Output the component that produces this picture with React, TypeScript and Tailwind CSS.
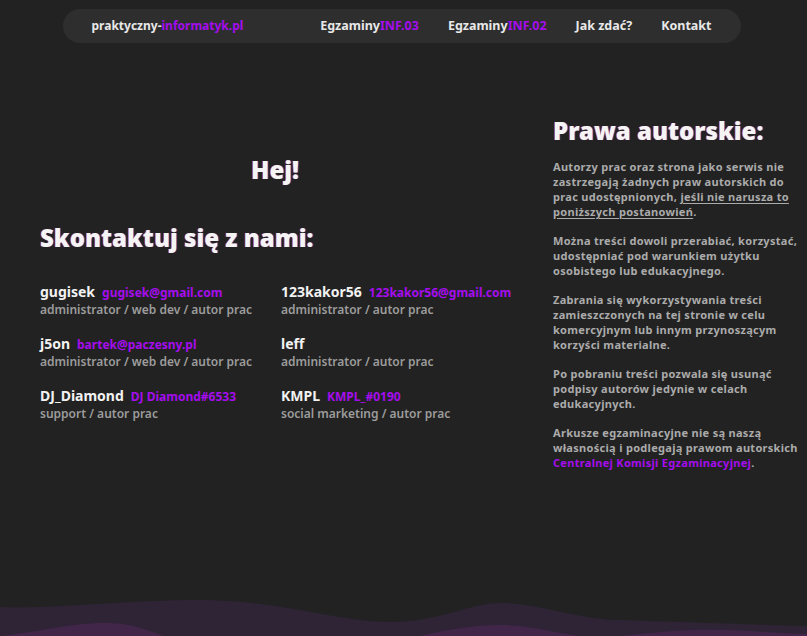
import React from "react";

const purple = "text-[#a50ded]";

function Contact({ name, handle, role }: { name: string; handle?: string; role: string }) {
  return (
    <div className="flex flex-col">
      <div className="flex items-baseline gap-[7px] h-[19px] leading-[19px] whitespace-nowrap">
        <span className="text-[14px] font-bold text-[#f2f2f2]">{name}</span>
        {handle && <span className={`text-[12px] font-bold ${purple}`}>{handle}</span>}
      </div>
      <div className="text-[12px] font-semibold text-[#9c9c9c] leading-[17px] h-[17px] whitespace-nowrap">{role}</div>
    </div>
  );
}

function Wave() {
  return (
    <svg className="block w-full h-[40px]" viewBox="0 0 807 40" preserveAspectRatio="none">
      <path
        d="M0 11 C60 13 120 4 200 4 C280 4 340 26 390 26 C440 26 470 7 500 7 C540 7 580 24 620 24 C680 26 740 28 807 30 L807 40 L0 40 Z"
        fill="#2e2435"
      />
      <path
        d="M0 40 C40 36 70 27 105 27 C135 27 150 36 165 40 Z M420 40 C450 33 475 29 500 29 C530 29 560 38 580 40 Z M620 40 C660 36 690 33 720 34 C760 35 790 38 807 38 L807 40 Z"
        fill="#42264a"
      />
    </svg>
  );
}

export default function App() {
  const shadow = "[text-shadow:-1px_0_rgba(255,40,40,0.5),1px_0_rgba(60,80,255,0.5)]";
  return (
    <div
      className="w-full h-[636px] bg-[#222222] flex flex-col overflow-hidden"
      style={{ fontFamily: "'Noto Sans', Lato, sans-serif" }}
    >
      <div className="pt-[9px] flex justify-center">
        <nav className="ml-[-4px] w-[678px] h-[34px] rounded-full bg-[#2e2e2e] flex items-center pl-[29px] pr-[29px] text-[12.5px] font-bold text-[#e8e8e8] whitespace-nowrap">
          <span className="text-[12px]">
            praktyczny-<span className={purple}>informatyk.pl</span>
          </span>
          <div className="ml-auto flex items-center gap-[29px]">
            <span>
              Egzaminy<span className={purple}>INF.03</span>
            </span>
            <span>
              Egzaminy<span className={purple}>INF.02</span>
            </span>
            <span>Jak zdać?</span>
            <span>Kontakt</span>
          </div>
        </nav>
      </div>

      <main className="flex pl-[40px] pt-[72px]">
        <section className="w-[513px] flex flex-col">
          <h1 className={`pt-[39px] w-[470px] text-center text-[24px] leading-[32px] font-black text-[#f4f4f4] ${shadow}`}>
            Hej!
          </h1>
          <h2 className={`mt-[36px] text-[24px] leading-[32px] font-black text-[#f4f4f4] whitespace-nowrap ${shadow}`}>
            Skontaktuj się z nami:
          </h2>
          <div className="mt-[28px] grid grid-cols-[241px_241px] gap-y-[16px]">
            <Contact name="gugisek" handle="gugisek@gmail.com" role="administrator / web dev / autor prac" />
            <Contact name="123kakor56" handle="123kakor56@gmail.com" role="administrator / autor prac" />
            <Contact name="j5on" handle="bartek@paczesny.pl" role="administrator / web dev / autor prac" />
            <Contact name="leff" role="administrator / autor prac" />
            <Contact name="DJ_Diamond" handle="DJ Diamond#6533" role="support / autor prac" />
            <Contact name="KMPL" handle="KMPL_#0190" role="social marketing / autor prac" />
          </div>
        </section>

        <aside className="w-[245px] flex flex-col">
          <h2 className={`text-[24px] leading-[32px] font-black text-[#f4f4f4] whitespace-nowrap ${shadow}`}>
            Prawa autorskie:
          </h2>
          <div className="mt-[12px] text-[11px] tracking-[0.3px] leading-[15px] font-bold text-[#ababab] flex flex-col gap-[14px] whitespace-nowrap">
            <p>
              Autorzy prac oraz strona jako serwis nie
              <br />
              zastrzegają żadnych praw autorskich do
              <br />
              prac udostępnionych,{" "}
              <span className="underline underline-offset-2">jeśli nie narusza to</span>
              <br />
              <span className="underline underline-offset-2">poniższych postanowień</span>.
            </p>
            <p>
              Można treści dowoli przerabiać, korzystać,
              <br />
              udostępniać pod warunkiem użytku
              <br />
              osobistego lub edukacyjnego.
            </p>
            <p>
              Zabrania się wykorzystywania treści
              <br />
              zamieszczonych na tej stronie w celu
              <br />
              komercyjnym lub innym przynoszącym
              <br />
              korzyści materialne.
            </p>
            <p>
              Po pobraniu treści pozwala się usunąć
              <br />
              podpisy autorów jedynie w celach
              <br />
              edukacyjnych.
            </p>
            <p>
              Arkusze egzaminacyjne nie są naszą
              <br />
              własnością i podlegają prawom autorskich
              <br />
              <span className={purple}>Centralnej Komisji Egzaminacyjnej</span>.
            </p>
          </div>
        </aside>
      </main>

      <div className="mt-auto">
        <Wave />
      </div>
    </div>
  );
}
